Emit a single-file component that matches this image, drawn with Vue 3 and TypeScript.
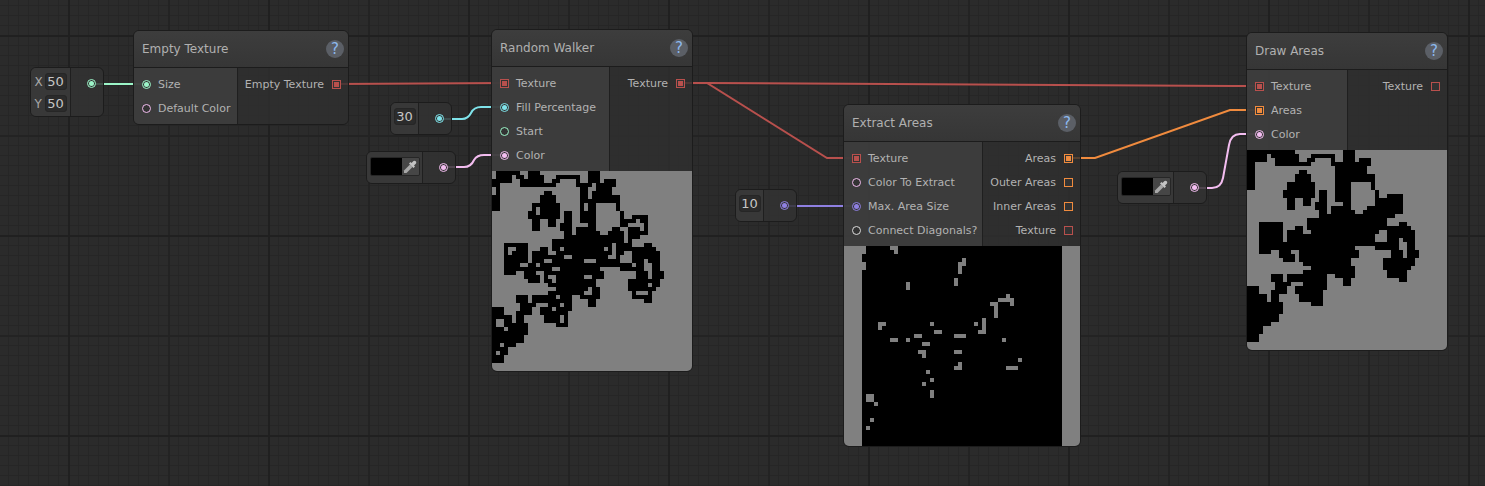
<script setup lang="ts">
type Port = { label: string; color: string; square?: boolean; filled?: boolean };

type GraphNode = {
  title: string;
  x: number;
  y: number;
  width: number;
  leftWidth: number;
  inputs: Port[];
  outputs: Port[];
  picture?: 'walker' | 'extract' | 'draw';
};

type InputField = { label?: string; value: string };

type InputBlock = {
  x: number;
  y: number;
  leftWidth: number;
  color: string;
  fields?: InputField[];
  swatch?: boolean;
};

const RED = '#b8504d';
const ORANGE = '#f08b3e';
const GREEN = '#9cf5c8';
const CYAN = '#7fe3ea';
const PINK = '#f3bdf0';
const PURPLE = '#8f80e2';
const WHITE = '#dcdcdc';

const nodes: GraphNode[] = [
  {
    title: 'Empty Texture', x: 133, y: 30, width: 216, leftWidth: 104,
    inputs: [
      { label: 'Size', color: GREEN, filled: true },
      { label: 'Default Color', color: PINK },
    ],
    outputs: [{ label: 'Empty Texture', color: RED, square: true, filled: true }],
  },
  {
    title: 'Random Walker', x: 491, y: 29, width: 202, leftWidth: 118, picture: 'walker',
    inputs: [
      { label: 'Texture', color: RED, square: true, filled: true },
      { label: 'Fill Percentage', color: CYAN, filled: true },
      { label: 'Start', color: GREEN },
      { label: 'Color', color: PINK, filled: true },
    ],
    outputs: [{ label: 'Texture', color: RED, square: true, filled: true }],
  },
  {
    title: 'Extract Areas', x: 843, y: 104, width: 238, leftWidth: 139, picture: 'extract',
    inputs: [
      { label: 'Texture', color: RED, square: true, filled: true },
      { label: 'Color To Extract', color: PINK },
      { label: 'Max. Area Size', color: PURPLE, filled: true },
      { label: 'Connect Diagonals?', color: WHITE },
    ],
    outputs: [
      { label: 'Areas', color: ORANGE, square: true, filled: true },
      { label: 'Outer Areas', color: ORANGE, square: true },
      { label: 'Inner Areas', color: ORANGE, square: true },
      { label: 'Texture', color: RED, square: true },
    ],
  },
  {
    title: 'Draw Areas', x: 1246, y: 32, width: 202, leftWidth: 101, picture: 'draw',
    inputs: [
      { label: 'Texture', color: RED, square: true, filled: true },
      { label: 'Areas', color: ORANGE, square: true, filled: true },
      { label: 'Color', color: PINK, filled: true },
    ],
    outputs: [{ label: 'Texture', color: RED, square: true }],
  },
];

const blocks: InputBlock[] = [
  {
    x: 30, y: 67, leftWidth: 40, color: GREEN,
    fields: [{ label: 'X', value: '50' }, { label: 'Y', value: '50' }],
  },
  { x: 390, y: 102, leftWidth: 28, color: CYAN, fields: [{ value: '30' }] },
  { x: 366, y: 151, leftWidth: 56, color: PINK, swatch: true },
  { x: 735, y: 189, leftWidth: 28, color: PURPLE, fields: [{ value: '10' }] },
  { x: 1117, y: 171, leftWidth: 56, color: PINK, swatch: true },
];

const wires = [
  { color: GREEN, d: 'M91 84 L146 84' },
  { color: RED, d: 'M336 84 L504 83' },
  { color: RED, d: 'M680 83 L707 83 L1233 86 L1259 86' },
  { color: RED, d: 'M680 83 L707 83 L827 158 L856 158' },
  { color: CYAN, d: 'M439 119 L462 119 Q468 119 471 113 Q474 107 481 107 L504 107' },
  { color: PINK, d: 'M443 167 L464 167 Q471 167 474 160 Q477 155 484 155 L504 155' },
  { color: PURPLE, d: 'M784 206 L856 206' },
  { color: ORANGE, d: 'M1068 158 L1095 158 L1230 110 L1259 110' },
  { color: PINK, d: 'M1194 188 L1212 188 Q1221 188 1223 178 L1229 145 Q1231 134 1240 134 L1259 134' },
];

// filled silhouette of the walker, one entry per row of the 50x50 texture
const silhouette = [
  '0-11 24-26', '0-4 6-12 16-21 24-26', '0-4 7-12 15-16 21 24-26 28-30', '0-1 7-15 21-30',
  '0-1 22-29', '0-1 13-14 22-29', '0-1 12-15 22-31', '0-1 12-15 22-31',
  '0-1 10-16 22-25 31', '0-1 10-16 22-25 31', '9-16 18-19 22-25 32', '9-16 18-19 22-25 32 35-38',
  '10-11 14-15 18-19 22-25 32-38', '10-11 14-15 17-19 24-25 32-38', '10-11 17-19 21-25 30-38', '18-19 21-26 29-38',
  '18-36', '15-34', '3-8 15-34 38-39', '3-8 12-13 15-40',
  '3-8 10-13 16-32 35-41', '3-8 10-31 35-41', '3-8 10-31 35-37 39-41', '3-37 40-41',
  '3-26 32-37 40-41', '3-5 8-10 13-27 36-38 40-42', '8-11 13-27 36-38 40-42', '9-11 13-25 34-41',
  '14-25 34-41', '16-26 34-40', '14-26 35-39', '6-8 10-19 22-26 35-39',
  '6-8 10-19 24-25 38-39', '7-10 14-19 24-25', '0-2 7-9 12-19', '0-2 6-9 12-18',
  '0-4 6-7 13-18', '0-4 6-7 13-18', '0-8 16-18', '0-8',
  '0-8', '0-7', '0-7', '0-5',
  '0-3', '0-3', '0-2', '0-2',
];

// cells that Extract Areas finds: [column from, column to, row from, row to]
const areas = [
  [7, 8, 0, 0], [8, 8, 1, 1], [0, 0, 0, 1], [0, 0, 4, 5], [25, 25, 3, 3], [24, 25, 4, 4], [24, 24, 5, 6],
  [23, 23, 8, 9], [11, 11, 9, 10], [36, 36, 12, 12], [34, 37, 13, 13], [37, 37, 14, 14], [32, 33, 14, 14],
  [33, 33, 15, 17], [30, 30, 18, 20], [28, 28, 19, 19], [29, 30, 21, 21], [4, 5, 19, 19], [4, 4, 20, 20],
  [17, 17, 19, 19], [18, 19, 21, 21], [7, 8, 23, 23], [11, 11, 23, 23], [13, 14, 22, 22], [23, 25, 22, 22],
  [35, 35, 23, 23], [15, 16, 24, 24], [14, 15, 26, 26], [15, 15, 27, 27], [23, 24, 26, 26], [39, 39, 28, 28],
  [24, 24, 29, 29], [23, 24, 30, 30], [36, 38, 30, 30], [16, 16, 31, 31], [17, 17, 33, 33], [15, 15, 34, 34],
  [17, 17, 36, 37], [1, 2, 37, 38], [3, 3, 39, 39], [2, 2, 43, 43], [1, 1, 45, 45],
];

const isArea = (col: number, row: number) =>
  areas.some(([c0, c1, r0, r1]) => col >= c0 && col <= c1 && row >= r0 && row <= r1);

const toPath = (keep: (col: number, row: number) => boolean) => {
  let d = '';
  silhouette.forEach((line, row) => {
    for (const run of line.split(' ')) {
      const [from, to = from] = run.split('-').map(Number);
      for (let col = from; col <= to; col++) {
        if (keep(col, row)) d += `M${col * 4} ${row * 4}h4v4h-4z`;
      }
    }
  });
  return d;
};

const pictures = {
  walker: toPath((col, row) => !isArea(col, row)),
  draw: toPath(() => true),
  extract: areas.map(([c0, c1, r0, r1]) =>
    `M${c0 * 4} ${r0 * 4}h${(c1 - c0 + 1) * 4}v${(r1 - r0 + 1) * 4}h${-(c1 - c0 + 1) * 4}z`).join(''),
};
</script>

<template>
  <div class="canvas">
    <svg class="wires" width="1485" height="486" viewBox="0 0 1485 486">
      <path v-for="(wire, i) in wires" :key="i" :d="wire.d" :stroke="wire.color" fill="none" stroke-width="2" />
    </svg>

    <div v-for="(block, i) in blocks" :key="i" class="block" :style="{ left: block.x + 'px', top: block.y + 'px' }">
      <div class="block-left" :style="{ width: block.leftWidth + 'px' }">
        <div v-for="field in block.fields" :key="field.value + field.label" class="field-row">
          <span v-if="field.label" class="field-label">{{ field.label }}</span>
          <span class="field">{{ field.value }}</span>
        </div>
        <div v-if="block.swatch" class="swatch">
          <span class="swatch-color"></span>
          <span class="swatch-pick">
            <svg width="14" height="14" viewBox="0 0 14 14">
              <path d="M1 13 L1 10.5 L7 4.5 L9.5 7 L3.5 13 Z" fill="#a8a8a8" />
              <path d="M6 3.5 L7.5 2 L8.5 3 L10.5 1 Q12 0.5 13 1.5 Q13.5 2.5 13 3.5 L11 5.5 L12 6.5 L10.5 8 Z" fill="#c4c4c4" />
            </svg>
          </span>
        </div>
      </div>
      <div class="block-right">
        <span class="socket filled" :style="{ color: block.color }"></span>
      </div>
    </div>

    <div
      v-for="node in nodes"
      :key="node.title"
      class="node"
      :style="{ left: node.x + 'px', top: node.y + 'px', width: node.width + 'px' }"
    >
      <div class="node-head">
        <span class="node-title">{{ node.title }}</span>
        <span class="help">?</span>
      </div>
      <div class="ports">
        <div class="ports-in" :style="{ width: node.leftWidth + 'px' }">
          <div v-for="port in node.inputs" :key="port.label" class="port">
            <span
              class="socket"
              :class="{ square: port.square, filled: port.filled }"
              :style="{ color: port.color }"
            ></span>
            <span>{{ port.label }}</span>
          </div>
        </div>
        <div class="ports-out">
          <div v-for="port in node.outputs" :key="port.label" class="port out">
            <span>{{ port.label }}</span>
            <span
              class="socket"
              :class="{ square: port.square, filled: port.filled }"
              :style="{ color: port.color }"
            ></span>
          </div>
        </div>
      </div>
      <div v-if="node.picture" class="picture" :class="node.picture">
        <svg width="200" height="200" viewBox="0 0 200 200" shape-rendering="crispEdges">
          <rect v-if="node.picture === 'extract'" width="200" height="200" fill="#000" />
          <path :d="pictures[node.picture]" :fill="node.picture === 'extract' ? '#808080' : '#000'" />
        </svg>
      </div>
    </div>
  </div>
</template>

<style scoped>
.canvas {
  position: relative;
  width: 1485px;
  height: 486px;
  overflow: hidden;
  font-family: "DejaVu Sans", sans-serif;
  font-size: 11px;
  color: #b2b2b2;
  background-color: #2b2b2b;
  background-image:
    linear-gradient(to right, #202020 2px, transparent 2px),
    linear-gradient(to bottom, #202020 2px, transparent 2px),
    linear-gradient(to right, #232323 2px, transparent 2px),
    linear-gradient(to bottom, #232323 2px, transparent 2px),
    linear-gradient(to right, #262626 1px, transparent 1px),
    linear-gradient(to bottom, #262626 1px, transparent 1px);
  background-size: 200px 200px, 200px 200px, 100px 100px, 100px 100px, 10px 10px, 10px 10px;
  background-position: 68px 0, 0 35px, 68px 0, 0 35px, 8px 0, 0 5px;
}

.wires {
  position: absolute;
  left: 0;
  top: 0;
}

.node,
.block {
  position: absolute;
  box-sizing: border-box;
  border: 1px solid #1c1c1c;
  border-radius: 6px;
  overflow: hidden;
}

.node-head {
  display: flex;
  align-items: center;
  justify-content: space-between;
  box-sizing: border-box;
  height: 37px;
  padding: 0 4px 0 8px;
  border-bottom: 1px solid #1c1c1c;
  background: linear-gradient(to bottom, #3d3d3d, #363636);
}

.node-title {
  font-size: 12px;
  color: #b0b0b0;
}

.help {
  display: flex;
  align-items: center;
  justify-content: center;
  width: 18px;
  height: 18px;
  border-radius: 50%;
  background: #5b5f66;
  color: #8db9ee;
  font-size: 15px;
}

.ports {
  display: flex;
  background: rgba(47, 47, 47, 0.8);
}

.ports-in {
  box-sizing: border-box;
  padding: 4px 0;
  border-right: 1px solid #1f1f1f;
  background: rgba(64, 64, 64, 0.8);
}

.ports-out {
  flex: 1;
  padding: 4px 0;
}

.port {
  display: flex;
  align-items: center;
  gap: 7px;
  height: 24px;
  padding-left: 8px;
  white-space: nowrap;
}

.port.out {
  justify-content: flex-end;
  gap: 8px;
  padding: 0 7px 0 0;
}

.socket {
  position: relative;
  flex: none;
  box-sizing: border-box;
  width: 9px;
  height: 9px;
  border: 1px solid currentColor;
  border-radius: 50%;
  background: #333;
}

.socket.filled::after {
  content: "";
  position: absolute;
  left: 1px;
  top: 1px;
  width: 5px;
  height: 5px;
  border-radius: 50%;
  background: currentColor;
}

.socket.square {
  border-radius: 0;
}

.socket.square.filled::after {
  border-radius: 0;
}

.picture {
  display: flex;
  justify-content: center;
  background: #808080;
}

.picture svg {
  display: block;
}

.block {
  display: flex;
  background: rgba(51, 51, 51, 0.85);
}

.block-left {
  display: flex;
  flex-direction: column;
  align-items: center;
  gap: 5px;
  box-sizing: border-box;
  min-height: 31px;
  padding: 5px 0 4px;
  border-right: 1px solid #1f1f1f;
  background: #383838;
}

.field-row {
  display: flex;
  align-items: center;
}

.field-label {
  width: 10px;
  font-size: 12px;
  color: #a8a8a8;
}

.field {
  box-sizing: border-box;
  width: 22px;
  height: 17px;
  border: 1px solid #262626;
  border-radius: 3px;
  background: #2b2b2b;
  color: #c6c6c6;
  font-size: 13px;
  line-height: 15px;
  text-align: center;
}

.swatch {
  display: flex;
  box-sizing: border-box;
  width: 50px;
  height: 19px;
  border: 1px solid #262626;
  border-radius: 2px;
  overflow: hidden;
}

.swatch-color {
  width: 31px;
  background: #000;
}

.swatch-pick {
  display: flex;
  flex: 1;
  align-items: center;
  justify-content: center;
  background: #464646;
}

.block-right {
  box-sizing: border-box;
  width: 32px;
  padding: 11px 0 0 16px;
}

.block-right .socket {
  display: block;
}
</style>

<style>
html,
body {
  background: #2b2b2b;
}
</style>
